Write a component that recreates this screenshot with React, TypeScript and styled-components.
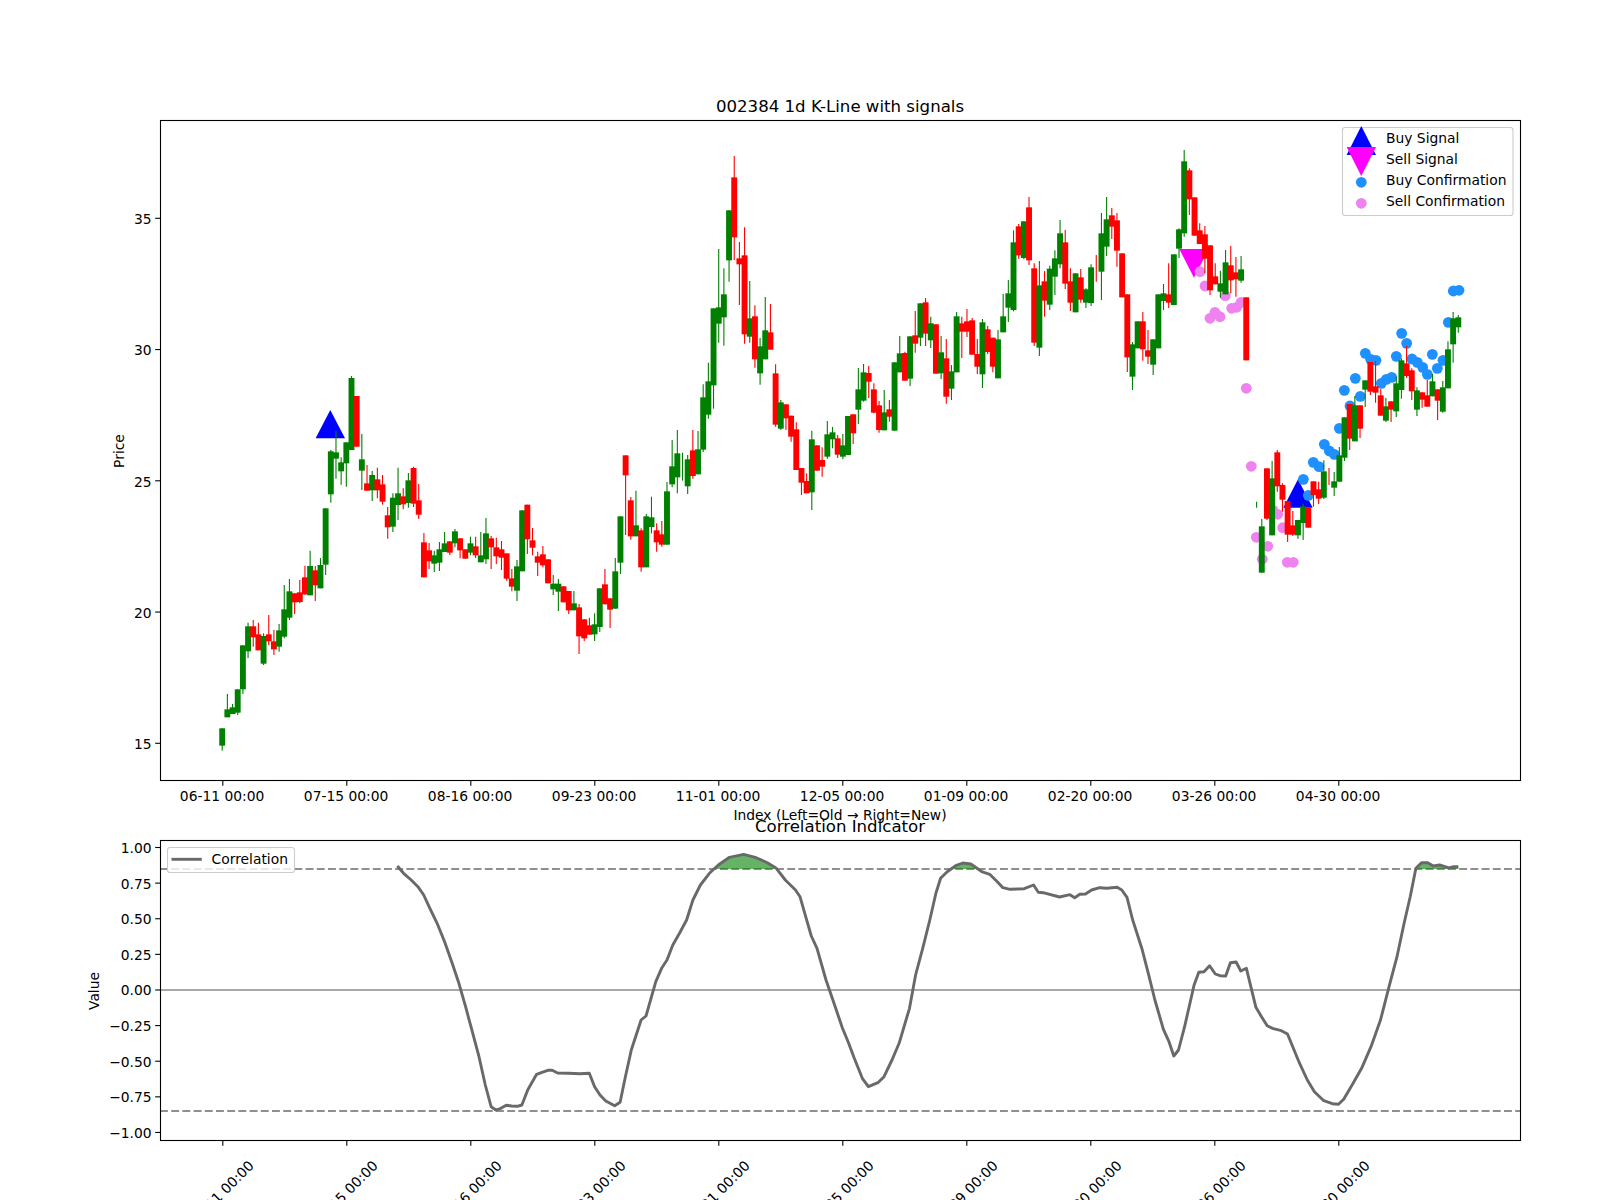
import React from 'react';
import styled, { createGlobalStyle } from 'styled-components';

const GlobalStyle = createGlobalStyle`
  html, body { margin: 0; padding: 0; background: #fff; }
`;

const Figure = styled.main`
  width: 1600px;
  height: 1200px;
  display: flex;
  flex-direction: column;
  background: #fff;
  overflow: hidden;
`;

const Panel = styled.svg<{ $height: number }>`
  display: block;
  width: 1600px;
  height: ${(p) => p.$height}px;
  flex: none;
  overflow: visible;
`;

const Label = styled.text`
  font-family: 'DejaVu Sans', sans-serif;
  font-size: 13.85px;
  fill: #000;
`;
const Title = styled(Label)`
  font-size: 16.6px;
  text-anchor: middle;
`;
const CenterLabel = styled(Label)`
  text-anchor: middle;
`;
const YTick = styled(Label)`
  text-anchor: end;
`;
const Frame = styled.rect`
  fill: none;
  stroke: #000;
  stroke-width: 1.1px;
`;
const Tick = styled.line`
  stroke: #000;
  stroke-width: 1.1px;
`;
const LegendBox = styled.rect`
  fill: #fff;
  fill-opacity: 0.8;
  stroke: #ccc;
  stroke-width: 1.1px;
`;
const Wick = styled.line<{ $up: boolean }>`
  stroke: ${(p) => (p.$up ? '#008000' : '#ff0000')};
  stroke-width: 1.1px;
`;
const Body = styled.rect<{ $up: boolean }>`
  fill: ${(p) => (p.$up ? '#008000' : '#ff0000')};
`;
const Dot = styled.circle<{ $kind: 'buy' | 'sell' }>`
  fill: ${(p) => (p.$kind === 'buy' ? '#1e90ff' : '#ee82ee')};
`;
const Marker = styled.polygon<{ $kind: 'buy' | 'sell' }>`
  fill: ${(p) => (p.$kind === 'buy' ? '#0000ff' : '#ff00ff')};
`;
const GuideDashed = styled.line`
  stroke: #8f8f8f;
  stroke-width: 2.08px;
  stroke-dasharray: 7.9 3.3;
`;
const GuideZero = styled.line`
  stroke: #a9a9a9;
  stroke-width: 2.08px;
`;
const CorrelationLine = styled.polyline`
  fill: none;
  stroke: #696969;
  stroke-width: 2.9px;
  stroke-linejoin: round;
`;
const CorrelationFill = styled.polygon`
  fill: #008000;
  fill-opacity: 0.6;
`;

type C = [string, number, number, number?, number?];

const x0 = 222.2;
const step = 5.172;
const xOf = (i: number) => x0 + step * i;

const groupA: C[] = [
  ['g',895,947,895,962],['g',838,862,792,862],['g',832,852,822,852],['g',778,848,778,855],['g',646,778,646,792],
  ['g',589,664,578,684],['r',589,622,570,650],['r',613,661,578,661],['g',618,701,610,705],['r',613,634,555,645],
  ['r',634,658,600,675],['g',601,650,582,665],['g',538,620,465,625],['g',484,563,447,570],['r',490,517,490,552],
  ['r',487,516,450,520],['r',442,493,407,495],['g',408,496,362,496],['r',421,466,408,513],['g',405,475,384,475],
  ['g',235,404,235,435],['g',64,193,60,218],['g',67,86,3,146],['g',97,124,82,164],['g',37,100,37,170],
  ['g',-156,60,-162,60],['r',-102,50,-102,50],['g',88,122,12,180],['r',160,182,105,182],['g',135,181,123,213],
  ['r',148,181,113,205],['r',163,215,135,224],['r',256,292,231,326],['g',203,290,190,306],['g',190,225,113,270],
  ['r',199,223,175,238],['g',151,219,129,233],['r',114,221,110,231],['r',211,254,162,267],['r',337,442,309,442],
  ['r',361,394,339,417],['g',376,401,362,426],['g',358,398,336,423],['g',340,366,306,366],['r',334,368,334,375],
  ['g',304,340,297,352],['r',325,361,325,385],['r',358,386,358,386],['g',340,368,320,376],['r',349,376,320,384],
  ['g',376,397,306,397],['g',310,388,264,402],['r',325,352,318,417],['r',352,379,323,402],['r',358,383,333,420],
  ['r',370,446,370,452],['r',445,470,417,484],['g',409,482,390,513],['g',241,424,241,424],['r',224,328,224,372],
  ['r',331,353,294,376],['r',379,398,365,438],['r',373,406,348,412],['r',388,460,388,460],['g',461,478,435,495],
  ['g',461,485,447,543],['r',469,517,469,517],['r',483,541,483,552],['g',520,541,483,541],['r',532,619,522,672],
  ['r',568,625,568,633],['r',586,614,563,614],['g',583,613,550,633],['g',475,591,475,606],['r',463,523,417,523],
  ['r',505,539,505,594],['g',424,536,384,536],['g',259,398,259,432],['r',76,136,76,315],['r',211,319,201,329],
  ['g',286,319,182,319],['r',301,412,295,425],['g',259,412,252,412],['g',262,291,200,310],['r',301,337,280,365],
  ['r',313,344,273,350],['g',184,344,156,344],['g',109,163,30,172],['g',70,142,0,190],['g',110,110,68,152],
  ['g',88,169,75,192],['r',61,138,0,146],['g',58,133,3,133],
];
const groupB: C[] = [
  ['g',832,989,793,996],['g',784,884,728,896],['g',565,796,565,866],['g',562,611,387,668],['g',523,592,445,677],
  ['g',271,421,271,485],['r',172,352,108,420],['r',415,433,366,555],['r',406,643,322,671],['g',595,650,483,668],
  ['r',589,718,556,743],['g',679,760,654,794],['g',631,718,531,718],['r',637,689,552,689],['r',760,914,733,920],
  ['g',847,926,840,930],
];
const groupC: C[] = [
  ['r',103,145,103,180],['r',137,200,137,215],['r',178,300,157,300],['r',294,338,294,375],['r',333,370,310,370],
  ['g',208,367,182,420],['r',226,302,226,302],['r',270,290,232,320],['g',193,260,153,266],['g',187,208,171,235],
  ['r',205,254,195,264],['g',226,260,192,268],['g',138,255,138,255],['r',133,190,133,222],
];
const groupD: C[] = [
  ['g',808,869,744,912],['g',757,842,732,845],['r',759,785,738,834],['r',808,878,790,880],['r',856,930,843,938],
  ['g',877,931,810,931],['r',868,890,840,905],['g',727,932,727,932],['g',700,757,648,757],['r',699,782,695,782],
  ['g',649,776,649,798],['r',646,671,573,698],['g',550,653,550,678],['r',547,641,534,678],['g',610,661,590,684],
  ['r',613,761,613,761],['g',697,760,648,777],['r',715,830,657,851],['g',754,806,735,840],['g',589,757,576,757],
  ['r',610,635,590,714],['r',604,635,567,651],['r',601,704,594,704],['r',702,740,657,762],['g',607,763,597,804],
  ['r',628,696,618,702],['r',653,740,653,757],['g',658,775,630,775],['g',589,637,522,637],['g',520,563,480,606],
  ['g',367,570,331,574],['r',319,406,312,416],['g',304,414,304,418],['r',262,421,231,435],['r',445,668,430,678],
  ['g',496,683,423,708],['r',484,542,453,590],['g',446,554,437,570],['g',415,470,391,525],['g',340,433,300,445],
  ['r',367,491,330,507],['r',484,548,445,573],['g',460,577,460,577],['r',472,539,447,548],['g',508,548,505,564],
  ['g',442,549,433,558],['r',445,445,405,485],['g',340,455,279,540],['g',298,380,231,408],['r',286,320,264,357],
  ['r',301,392,279,440],['r',400,532,400,532],['r',523,712,523,756],['g',673,770,666,810],['g',604,685,604,685],
  ['r',604,688,576,722],['r',691,710,630,732],['g',658,734,658,765],['g',523,685,523,685],['g',520,543,492,570],
  ['r',523,548,430,564],['g',403,555,403,555],['g',328,386,325,414],['g',124,340,90,350],['r',151,238,145,285],
  ['r',232,347,232,347],['r',331,372,310,372],['r',343,416,318,460],['r',376,511,376,525],['r',469,493,430,493],
  ['g',490,515,452,533],['g',427,523,390,523],['r',436,481,378,520],['r',457,478,411,530],['g',448,482,408,488],
  ['r',532,721,532,721],
];
const groupE: C[] = [
  ['g',605,605,605,605],['g',614,614,605,623],['g',679,818,657,818],['r',505,656,505,660],['g',535,706,483,706],
  ['r',457,559,450,575],['r',555,599,550,635],['r',603,704,603,726],['r',676,704,633,708],['g',660,706,660,716],
  ['g',619,669,612,720],['r',623,683,623,683],['r',544,585,544,620],['r',568,596,545,612],['g',514,593,481,597],
  ['r',530,530,504,555],['g',544,563,516,588],['g',466,545,441,545],['g',352,473,352,483],['r',312,416,312,450],
  ['g',316,424,288,424],['r',316,386,316,414],['g',241,269,241,321],['r',186,275,186,285],['r',259,278,183,308],
  ['r',286,347,267,347],['g',319,362,294,366],['r',304,329,304,366],['g',250,334,230,351],['g',181,270,175,296],
  ['r',190,228,138,234],['r',211,274,205,300],['g',271,329,262,348],['r',277,299,277,323],['r',286,320,240,320],
  ['g',244,289,222,289],['r',268,302,268,360],['g',262,335,243,338],['g',148,265,124,265],['g',55,133,36,188],
  ['g',52,82,45,98],
];

type Candle = { i: number; up: boolean; t: number; b: number; wt: number; wb: number };
const build = (list: C[], first: number, y0: number): Candle[] =>
  list.map(([c, t, b, wt, wb], k) => ({
    i: first + k,
    up: c === 'g',
    t: y0 + t / 3,
    b: y0 + b / 3,
    wt: y0 + (wt ?? t) / 3,
    wb: y0 + (wb ?? b) / 3,
  }));

const candles: Candle[] = [
  ...build(groupA, 0, 430),
  ...build(groupB, 93, 120),
  ...build(groupC, 109, 370),
  ...build(groupD, 123, 120),
  ...build(groupE, 199, 300),
];

const buyDots: [number, number][] = [
  [370,538],[385,586],[400,487],[417,500],[433,433],[448,453],[463,463],[478,385],[510,318],[541,289],
  [493,271],[526,235],[556,160],[572,178],[588,181],[604,250],[619,238],[635,232],[649,169],[665,100],
  [680,130],[696,177],[712,187],[728,202],[742,223],[757,163],[772,205],[789,181],[805,67],
].map(([x, y]) => [1180 + x / 3, 300 + y / 3] as [number, number]);
buyDots.push([1453.3, 291], [1459, 290.3]);

const sellDots: [number, number][] = [
  [1200,271.7],[1205,286],[1225.3,295.7],[1210,318.3],[1215,312.3],[1220,316.7],[1231.7,308.3],[1236.7,307.3],
  [1241,302.5],[1246.3,388.3],[1251.3,466.3],[1272.7,510],[1277.7,514.3],[1282.7,527.7],[1256.3,537.3],
  [1267.7,546.3],[1262.3,559.3],[1287.3,562.3],[1293.3,562.3],
];

const z6: [number, number][] = [
  [666,318],[680,340],[697,360],[712,380],[725,405],[739,445],[755,490],[772,545],[789,610],[804,670],[819,740],
  [834,815],[849,890],[863,975],[876,1040],[887,1050],[898,1045],[910,1036],[922,1038],[935,1039],[945,1035],
  [958,990],[978,943],[990,937],[1003,931],[1013,931],[1025,939],[1050,940],[1075,941],[1096,940],[1108,980],
  [1120,1005],[1133,1023],[1153,1037],[1165,1027],[1177,950],[1190,870],[1212,780],[1223,768],[1245,665],
  [1258,625],[1270,600],[1283,555],[1298,520],[1314,480],[1328,420],[1345,375],[1365,340],[1385,315],[1410,292],
  [1442,283],[1470,293],[1495,308],[1515,325],[1535,360],[1558,390],
];
const z7: [number, number][] = [
  [0,410],[12,470],[24,528],[36,565],[55,660],[72,730],[90,805],[102,845],[115,895],[132,955],[145,980],[165,968],
  [178,950],[195,900],[210,850],[232,745],[245,645],[260,565],[275,480],[288,400],[298,355],[312,335],[330,317],
  [345,309],[362,312],[375,325],[385,335],[402,343],[418,365],[430,383],[445,388],[475,386],[495,375],[505,397],
  [515,398],[550,411],[572,404],[582,413],[593,403],[605,402],[618,390],[635,383],[650,385],[672,382],[682,390],
  [693,412],[705,480],[725,568],[738,640],[752,720],[770,808],[782,845],[792,888],[802,870],[815,800],[835,675],
  [845,637],[856,635],[868,617],[880,642],[890,647],[902,648],[912,608],[924,606],[934,633],[946,625],[966,742],
  [978,770],[990,797],[1003,806],[1018,811],[1033,822],[1058,908],[1075,960],[1090,995],[1110,1022],[1128,1031],
  [1141,1033],[1152,1018],[1172,970],[1190,925],[1210,860],[1230,780],[1250,670],[1265,590],[1280,490],[1293,410],
  [1305,325],[1317,308],[1330,308],[1342,318],[1355,315],[1375,324],[1385,320],[1395,320],
];
const corr: [number, number][] = [
  ...z6.map(([x, y]) => [100 + x / 2.24, 760 + y / 3] as [number, number]),
  ...z7.map(([x, y]) => [800 + x / 2.119, 760 + y / 3] as [number, number]),
];
const corrPoints = corr.map(([x, y]) => `${x.toFixed(1)},${y.toFixed(1)}`).join(' ');

const level = 869;
const fillAreas = (() => {
  const areas: string[] = [];
  let cur: [number, number][] = [];
  for (let k = 0; k < corr.length; k++) {
    const [x, y] = corr[k];
    if (y < level) {
      if (cur.length === 0 && k > 0) {
        const [px, py] = corr[k - 1];
        cur.push([px + ((level - py) / (y - py)) * (x - px), level]);
      }
      cur.push([x, y]);
    } else if (cur.length) {
      const [px, py] = corr[k - 1];
      cur.push([px + ((level - py) / (y - py)) * (x - px), level]);
      areas.push(cur.map((p) => p.join(',')).join(' '));
      cur = [];
    }
  }
  if (cur.length) {
    cur.push([cur[cur.length - 1][0], level]);
    areas.push(cur.map((p) => p.join(',')).join(' '));
  }
  return areas;
})();

const tickXs = Array.from({ length: 10 }, (_, k) => 222.8 + 124 * k);
const dates = ['06-11 00:00','07-15 00:00','08-16 00:00','09-23 00:00','11-01 00:00','12-05 00:00','01-09 00:00','02-20 00:00','03-26 00:00','04-30 00:00'];
const priceTicks = [15, 20, 25, 30, 35];
const yPrice = (p: number) => 743.3 - (p - 15) * 26.25;
const valueTicks = ['1.00','0.75','0.50','0.25','0.00','\u22120.25','\u22120.50','\u22120.75','\u22121.00'];
const yValue = (k: number) => 847.5 + k * 35.62;

const up = (x: number, top: number, base: number) => `${x - 14.7},${base} ${x + 14.7},${base} ${x},${top}`;
const down = (x: number, top: number, tip: number) => `${x - 14.7},${top} ${x + 14.7},${top} ${x},${tip}`;

const TOP_H = 826;

export default function App() {
  return (
    <Figure>
      <GlobalStyle />
      <Panel $height={TOP_H} viewBox={`0 0 1600 ${TOP_H}`}>
        <Title x={840} y={111.5}>002384 1d K-Line with signals</Title>
        <Marker $kind="buy" points={up(330.3, 410, 438.3)} />
        <Marker $kind="sell" points={down(1194, 249, 277.7)} />
        <Marker $kind="buy" points={up(1298, 479.3, 507.7)} />
        {buyDots.map(([x, y], k) => <Dot key={k} $kind="buy" cx={x} cy={y} r={5.4} />)}
        {sellDots.map(([x, y], k) => <Dot key={k} $kind="sell" cx={x} cy={y} r={5.4} />)}
        {candles.map((c) => (
          <g key={c.i}>
            <Wick $up={c.up} x1={xOf(c.i)} x2={xOf(c.i)} y1={c.wt} y2={c.wb} />
            {c.b > c.t && <Body $up={c.up} x={xOf(c.i) - 2.95} y={c.t} width={5.9} height={c.b - c.t} />}
          </g>
        ))}
        <Frame x={160.5} y={120.5} width={1360} height={660} />
        {priceTicks.map((p) => (
          <g key={p}>
            <Tick x1={155.2} x2={160} y1={yPrice(p)} y2={yPrice(p)} />
            <YTick x={151.6} y={yPrice(p) + 5.8}>{p}</YTick>
          </g>
        ))}
        {tickXs.map((x, k) => (
          <g key={k}>
            <Tick x1={x} x2={x} y1={781} y2={785.8} />
            <CenterLabel x={x - 0.7} y={801}>{dates[k]}</CenterLabel>
          </g>
        ))}
        <CenterLabel transform="translate(124 451) rotate(-90)">Price</CenterLabel>
        <CenterLabel x={840} y={820}>Index (Left=Old → Right=New)</CenterLabel>
        <LegendBox x={1342.5} y={127.5} width={170.5} height={88} rx={2.8} />
        <Marker $kind="buy" points={up(1361.3, 126, 155)} />
        <Marker $kind="sell" points={down(1361.3, 147, 176)} />
        <Dot $kind="buy" cx={1361.3} cy={182.3} r={5.4} />
        <Dot $kind="sell" cx={1361.3} cy={203.3} r={5.4} />
        <Label x={1386} y={143.2}>Buy Signal</Label>
        <Label x={1386} y={164.2}>Sell Signal</Label>
        <Label x={1386} y={185.2}>Buy Confirmation</Label>
        <Label x={1386} y={206.2}>Sell Confirmation</Label>
      </Panel>
      <Panel $height={1200 - TOP_H} viewBox={`0 ${TOP_H} 1600 ${1200 - TOP_H}`}>
        <Title x={840} y={832}>Correlation Indicator</Title>
        <GuideZero x1={160} x2={1520} y1={990} y2={990} />
        <GuideDashed x1={160} x2={1520} y1={869} y2={869} />
        <GuideDashed x1={160} x2={1520} y1={1111} y2={1111} />
        {fillAreas.map((pts, k) => <CorrelationFill key={k} points={pts} />)}
        <CorrelationLine points={corrPoints} />
        <Frame x={160.5} y={840.5} width={1360} height={300} />
        {valueTicks.map((t, k) => (
          <g key={t}>
            <Tick x1={155.2} x2={160} y1={yValue(k)} y2={yValue(k)} />
            <YTick x={151.6} y={yValue(k) + 5.5}>{t}</YTick>
          </g>
        ))}
        {tickXs.map((x, k) => (
          <g key={k}>
            <Tick x1={x} x2={x} y1={1141} y2={1145.8} />
            <CenterLabel transform={`translate(${x + 2} 1196.5) rotate(-45)`}>{dates[k]}</CenterLabel>
          </g>
        ))}
        <CenterLabel transform="translate(99 991) rotate(-90)">Value</CenterLabel>
        <LegendBox x={167.5} y={847.5} width={127} height={25} rx={2.8} />
        <CorrelationLine points="171.5,859.3 201.8,859.3" />
        <Label x={211.6} y={864}>Correlation</Label>
      </Panel>
    </Figure>
  );
}
